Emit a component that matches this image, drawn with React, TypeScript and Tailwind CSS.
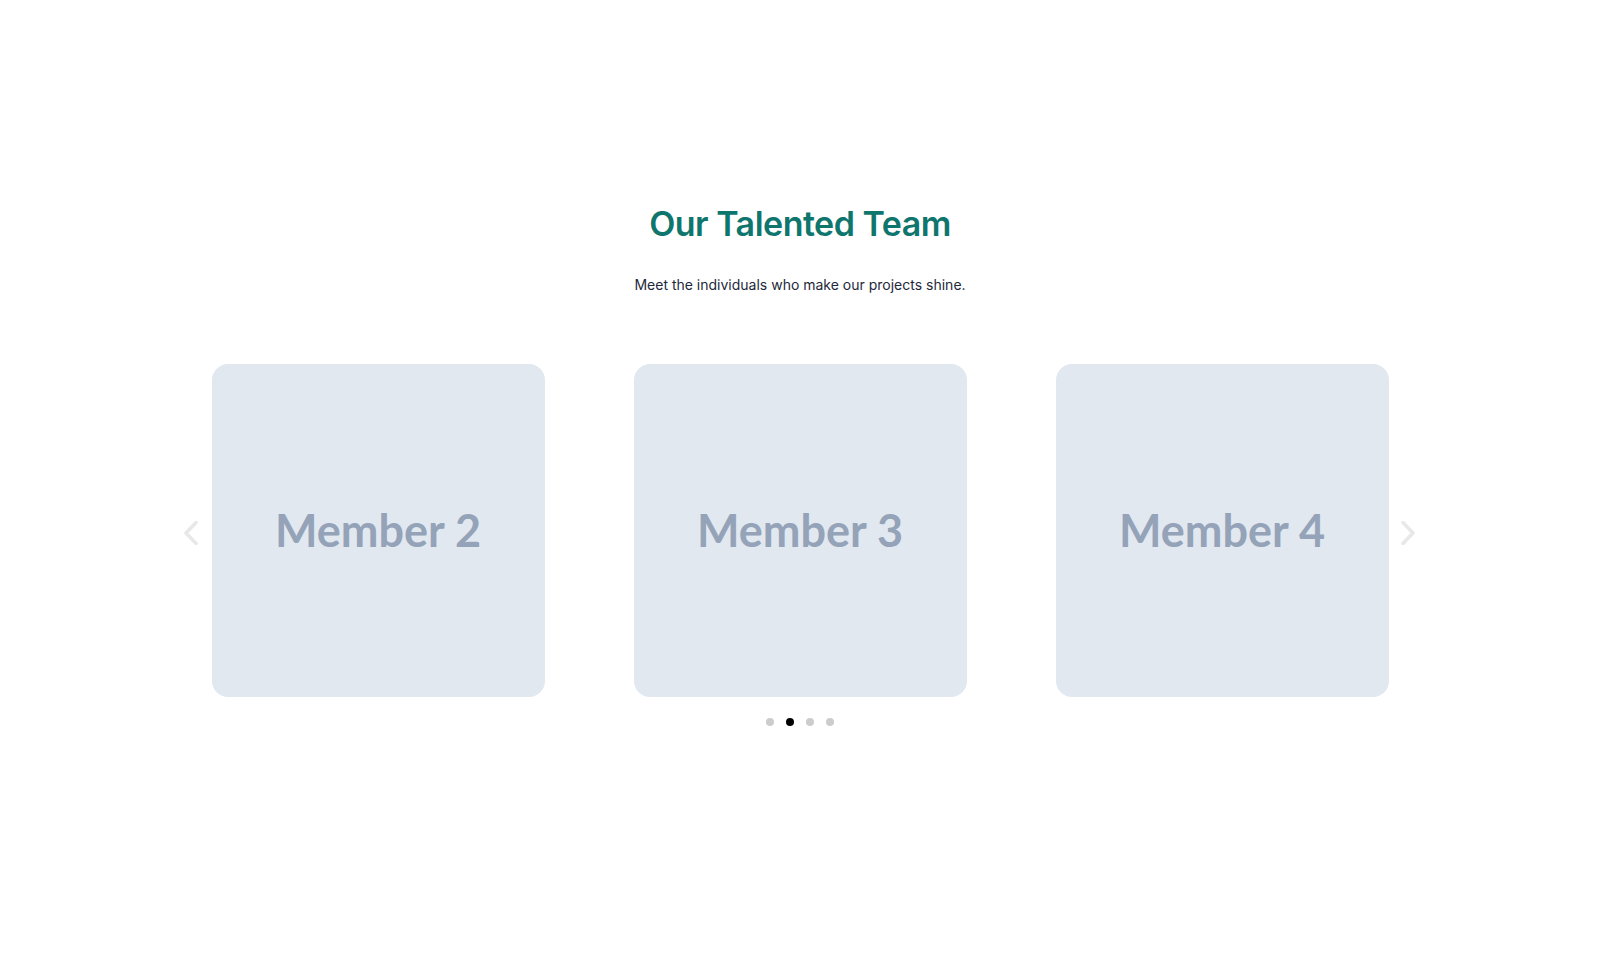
import { useState } from 'react';

const members = ['Member 1', 'Member 2', 'Member 3', 'Member 4'];

function Chevron({ dir }: { dir: 'left' | 'right' }) {
  return (
    <svg width="14" height="24" viewBox="0 0 14 24" fill="none" className="block">
      <path
        d={dir === 'left' ? 'M12 1.5 2 12l10 10.5' : 'M2 1.5 12 12 2 22.5'}
        stroke="currentColor"
        strokeWidth="3.5"
        strokeLinecap="round"
        strokeLinejoin="round"
      />
    </svg>
  );
}

export default function App() {
  const [active] = useState(1);
  const visible = members.slice(active, active + 3);

  return (
    <div className="min-h-screen bg-white flex flex-col items-center pt-[204px]">
      <h2 className="text-[34px] leading-[40px] font-semibold text-[#0f766e] tracking-[-0.5px] font-['Inter',sans-serif]">
        Our Talented Team
      </h2>
      <p className="mt-[29px] text-[14px] leading-6 text-[#1e293b] font-['Inter',sans-serif]">
        Meet the individuals who make our projects shine.
      </p>

      {/* slider */}
      <div className="relative mt-[67px] w-[1266px]">
        <div className="flex">
          {visible.map((name) => (
            <div key={name} className="w-[422px] px-[44.5px]">
              <div className="h-[333px] rounded-2xl bg-[#e2e8f0] flex items-center justify-center">
                <span className="text-[45px] font-bold text-[#94a3b8] font-['Lato',sans-serif]">{name}</span>
              </div>
            </div>
          ))}
        </div>
        <button className="absolute left-[17px] top-[calc(50%+2px)] -translate-y-1/2 text-[#e8e8e8]">
          <Chevron dir="left" />
        </button>
        <button className="absolute right-[18px] top-[calc(50%+2px)] -translate-y-1/2 text-[#e8e8e8]">
          <Chevron dir="right" />
        </button>
      </div>

      <div className="mt-[21px] flex gap-3">
        {members.map((m, i) => (
          <span
            key={m}
            className={i === active ? 'w-2 h-2 rounded-full bg-black' : 'w-2 h-2 rounded-full bg-[#cccccc]'}
          />
        ))}
      </div>
    </div>
  );
}
